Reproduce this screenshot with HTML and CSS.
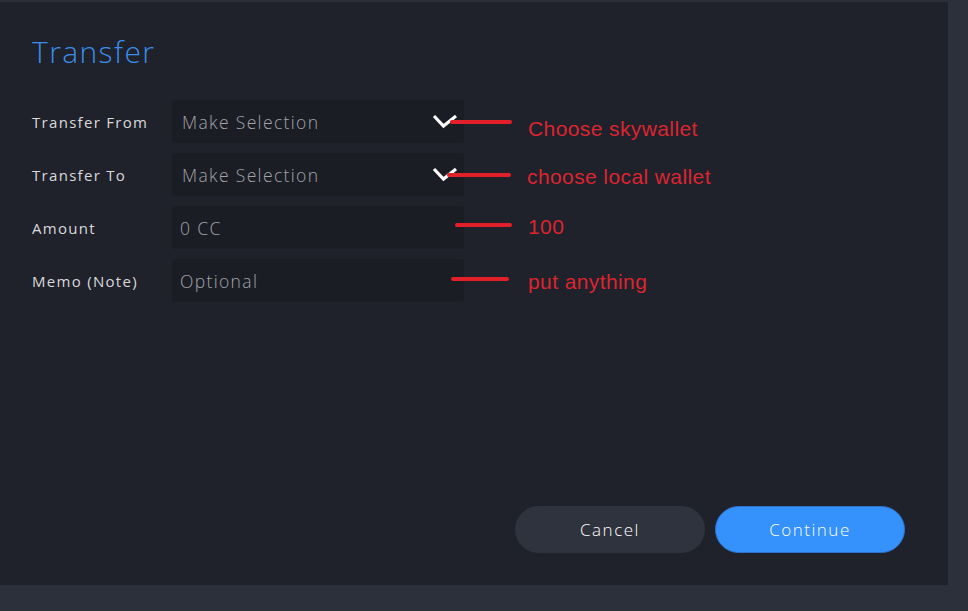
FILE: index.html
```html
<!DOCTYPE html>
<html>
<head>
<meta charset="utf-8">
<link rel="stylesheet" href="styles.css">
</head>
<body>
<div class="panel">
  <h1 class="title">Transfer</h1>
  <div class="form">
    <div class="row">
      <div class="label">Transfer From</div>
      <div class="field select">
        <span class="value">Make Selection</span>
        <svg class="chev" width="26" height="16" viewBox="0 0 26 16"><path d="M2 3 L11.5 13 L24 3" fill="none" stroke="#fff" stroke-width="3.2"/></svg>
      </div>
      <div class="note n1"><span class="line"></span><span class="ntext">Choose skywallet</span></div>
    </div>
    <div class="row">
      <div class="label">Transfer To</div>
      <div class="field select">
        <span class="value">Make Selection</span>
        <svg class="chev" width="26" height="16" viewBox="0 0 26 16"><path d="M2 3 L11.5 13 L24 3" fill="none" stroke="#fff" stroke-width="3.2"/></svg>
      </div>
      <div class="note n2"><span class="line"></span><span class="ntext">choose local wallet</span></div>
    </div>
    <div class="row">
      <div class="label">Amount</div>
      <div class="field input"><span class="value">0 CC</span></div>
      <div class="note n3"><span class="line"></span><span class="ntext">100</span></div>
    </div>
    <div class="row">
      <div class="label">Memo (Note)</div>
      <div class="field input"><span class="value">Optional</span></div>
      <div class="note n4"><span class="line"></span><span class="ntext">put anything</span></div>
    </div>
  </div>
  <div class="actions">
    <button class="btn cancel">Cancel</button>
    <button class="btn continue">Continue</button>
  </div>
</div>
</body>
</html>
```
FILE: styles.css
```css
html, body {
  margin: 0;
  padding: 0;
  background: #2c303b;
  width: 968px;
  height: 611px;
  overflow: hidden;
  font-family: "Open Sans", "DejaVu Sans", sans-serif;
}
.panel {
  box-sizing: border-box;
  width: 948px;
  height: 585px;
  background: #1f212b;
  border-top: 2px solid #2b2e38;
  padding: 34px 0 0 32px;
  display: flex;
  flex-direction: column;
}
.title {
  margin: 0;
  font-weight: 300;
  font-size: 30px;
  line-height: 32px;
  letter-spacing: 1.4px;
  color: #3b8de8;
}
.form {
  margin-top: 32px;
  display: flex;
  flex-direction: column;
  gap: 10px;
}
.row {
  position: relative;
  display: flex;
  align-items: center;
  height: 43px;
}
.label {
  width: 140px;
  font-size: 15px;
  letter-spacing: 1.3px;
  color: #d9d9dc;
  font-weight: 400;
}
.field {
  box-sizing: border-box;
  width: 292px;
  height: 43px;
  background: #1b1d25;
  border-radius: 4px;
  display: flex;
  align-items: center;
  padding-left: 10px;
  font-size: 17.5px;
  font-weight: 300;
  letter-spacing: 1.35px;
  color: #a2a4aa;
}
.field.input { padding-left: 8px; }
.chev {
  margin-left: auto;
  margin-right: 6px;
  margin-top: -2px;
}
.note {
  position: absolute;
  top: 0;
  height: 43px;
  display: flex;
  align-items: center;
}
.line {
  display: block;
  height: 4px;
  border-radius: 2px;
  background: #e3202a;
}
.ntext {
  font-family: "Liberation Sans", "Open Sans", sans-serif;
  font-size: 21px;
  letter-spacing: 0.4px;
  color: #dc2530;
  margin-left: 16px;
}
.n1 { left: 418px; }
.n1 .line { width: 62px; }
.n1 .ntext { margin-top: 15px; }
.n2 { left: 415px; }
.n2 .line { width: 64px; }
.n2 .ntext { margin-left: 16px; margin-top: 4px; }
.n3 { left: 423px; }
.n3 .line { width: 57px; margin-top: -6px; }
.n3 .ntext { margin-left: 16px; margin-top: -2px; }
.n4 { left: 419px; }
.n4 .line { width: 58px; margin-top: -4px; }
.n4 .ntext { margin-left: 19px; margin-top: 2px; }
.actions {
  margin-top: auto;
  margin-bottom: 32px;
  display: flex;
  gap: 10px;
  padding-left: 483px;
}
.btn {
  width: 190px;
  height: 47px;
  border-radius: 24px;
  border: 1px solid transparent;
  font-family: "Open Sans", "DejaVu Sans", sans-serif;
  font-size: 17px;
  font-weight: 300;
  letter-spacing: 1.5px;
  color: #ffffff;
}
.cancel { background: #2f333d; }
.continue { background: #3591fb; border-color: #2e72cf; }
```
